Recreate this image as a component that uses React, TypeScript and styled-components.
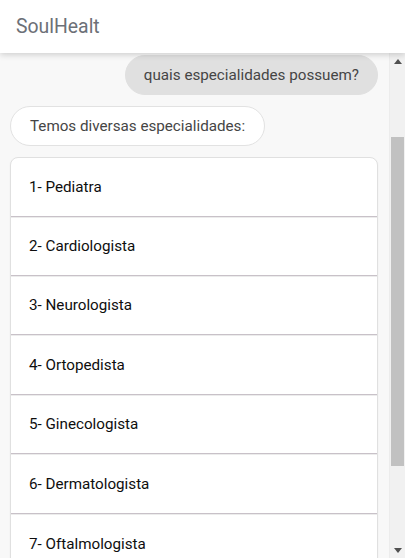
import React from "react";
import styled, { createGlobalStyle } from "styled-components";

const Global = createGlobalStyle`
  html, body { margin: 0; padding: 0; height: 100%; }
  body { font-family: Roboto, "Noto Sans", Arial, sans-serif; background: #f8f8f8; }
  #root { height: 100%; }
`;

const Shell = styled.div`
  display: flex;
  flex-direction: column;
  height: 558px;
  width: 405px;
  background: #f8f8f8;
  overflow: hidden;
`;

const Header = styled.header`
  position: relative;
  z-index: 2;
  flex: 0 0 53px;
  display: flex;
  align-items: center;
  padding: 0 16px;
  background: #ffffff;
  box-shadow: 0 2px 6px rgba(0, 0, 0, 0.16);
`;

const Title = styled.h1`
  margin: 0;
  font-size: 19.4px;
  font-weight: 400;
  color: #6c7077;
`;

const Body = styled.div`
  flex: 1;
  display: flex;
  min-height: 0;
`;

const Scroller = styled.main`
  flex: 1;
  overflow: hidden;
  background: #f8f8f8;
`;

const Thread = styled.div`
  display: flex;
  flex-direction: column;
  gap: 11px;
  padding: 2px 11px 20px 10px;
`;

const Bubble = styled.div<{ $mine?: boolean }>`
  align-self: ${(p) => (p.$mine ? "flex-end" : "flex-start")};
  box-sizing: border-box;
  height: 40px;
  display: flex;
  align-items: center;
  padding: 0 ${(p) => (p.$mine ? "18px" : "19px")};
  border-radius: 20px;
  font-size: 15.2px;
  color: #454545;
  background: ${(p) => (p.$mine ? "#e0e0e0" : "#ffffff")};
  border: 1px solid ${(p) => (p.$mine ? "#e0e0e0" : "#e2e2e2")};
`;

const Card = styled.ul`
  list-style: none;
  margin: 0;
  padding: 0;
  background: #ffffff;
  border: 1px solid #e0e0e0;
  border-radius: 8px;
  box-shadow: 0 1px 2px rgba(0, 0, 0, 0.05);
  overflow: hidden;
`;

const Item = styled.li`
  box-sizing: border-box;
  height: 59.45px;
  display: flex;
  align-items: center;
  padding: 0 18px;
  font-size: 15.2px;
  color: #0e0e0e;
  border-bottom: 1px solid #c8c1c8;
  box-shadow: 0 1px 0 #ececec;
  &:first-child { height: 58.6px; }
  &:last-child { border-bottom: none; box-shadow: none; }
`;

const Rail = styled.div`
  flex: 0 0 16px;
  display: flex;
  flex-direction: column;
  background: #f1f1f1;
  border-left: 1px solid #ececec;
  box-sizing: border-box;
`;

const Arrow = styled.div`
  flex: 0 0 16px;
  display: flex;
  align-items: center;
  justify-content: center;
`;

const Track = styled.div`
  flex: 1;
  display: flex;
  flex-direction: column;
  padding-top: 68px;
`;

const Thumb = styled.div`
  height: 329px;
  margin: 0 1px 0 1px;
  background: #c1c1c1;
`;

const Tri = ({ up }: { up?: boolean }) => (
  <svg width="8" height="5" viewBox="0 0 8 5">
    <path d={up ? "M0 5 L4 0 L8 5 Z" : "M0 0 L4 5 L8 0 Z"} fill="#505050" />
  </svg>
);

const specialties = [
  "1- Pediatra",
  "2- Cardiologista",
  "3- Neurologista",
  "4- Ortopedista",
  "5- Ginecologista",
  "6- Dermatologista",
  "7- Oftalmologista",
];

export default function App() {
  return (
    <Shell>
      <Global />
      <Header>
        <Title>SoulHealt</Title>
      </Header>
      <Body>
        <Scroller>
          <Thread>
            <Bubble $mine>quais especialidades possuem?</Bubble>
            <Bubble>Temos diversas especialidades:</Bubble>
            <Card>
              {specialties.map((s) => (
                <Item key={s}>{s}</Item>
              ))}
            </Card>
          </Thread>
        </Scroller>
        <Rail>
          <Arrow><Tri up /></Arrow>
          <Track>
            <Thumb />
          </Track>
          <Arrow><Tri /></Arrow>
        </Rail>
      </Body>
    </Shell>
  );
}
